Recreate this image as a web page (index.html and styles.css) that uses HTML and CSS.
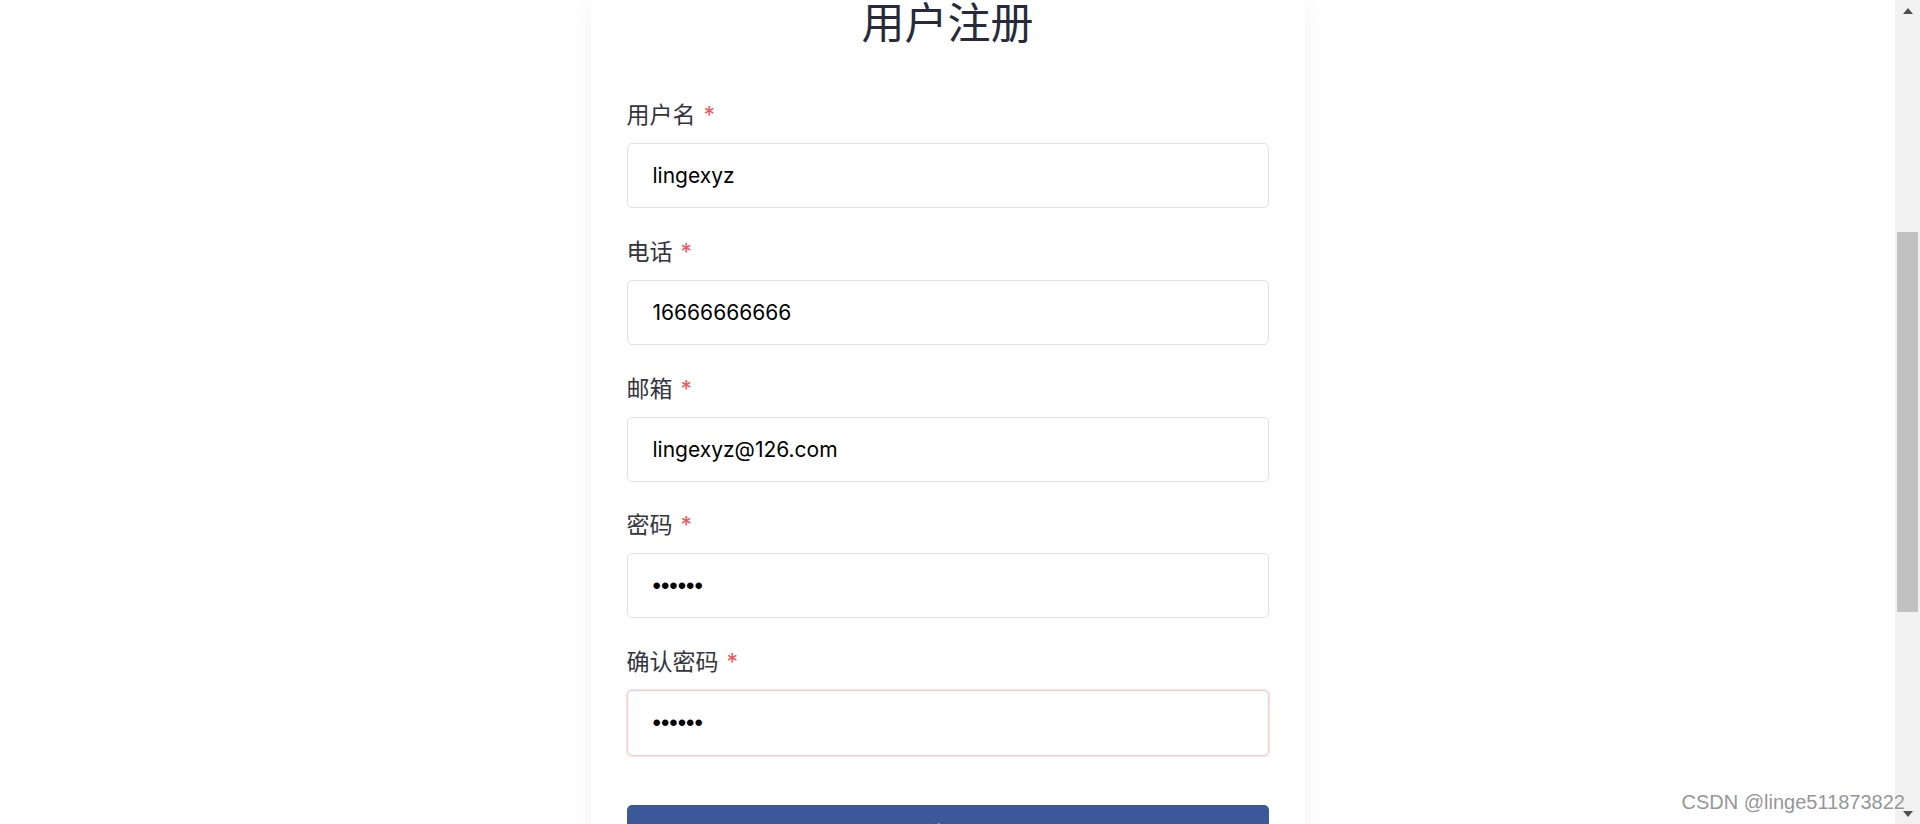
FILE: index.html
```html
<!DOCTYPE html>
<html lang="zh-CN">
<head>
<meta charset="utf-8">
<title>用户注册</title>
<link rel="stylesheet" href="styles.css">
</head>
<body>
<div class="page">
  <main class="main">
    <div class="card">
      <h1 class="title">用户注册</h1>
      <form class="form">
        <div class="field">
          <label class="label">用户名<span class="req">*</span></label>
          <input class="input" type="text" value="lingexyz">
        </div>
        <div class="field">
          <label class="label">电话<span class="req">*</span></label>
          <input class="input" type="text" value="16666666666">
        </div>
        <div class="field">
          <label class="label">邮箱<span class="req">*</span></label>
          <input class="input" type="text" value="lingexyz@126.com">
        </div>
        <div class="field">
          <label class="label">密码<span class="req">*</span></label>
          <input class="input input-password" type="password" value="123456">
        </div>
        <div class="field">
          <label class="label">确认密码<span class="req">*</span></label>
          <input class="input input-password input-invalid" type="password" value="123456">
        </div>
        <button class="btn" type="button">注册</button>
      </form>
    </div>
  </main>
  <div class="scrollbar">
    <div class="sb-btn">
      <svg width="10" height="6" viewBox="0 0 10 6"><path d="M5 0 L10 6 L0 6 Z" fill="#505050"/></svg>
    </div>
    <div class="sb-track">
      <div class="sb-thumb"></div>
    </div>
    <div class="sb-btn">
      <svg width="10" height="6" viewBox="0 0 10 6"><path d="M0 0 L10 0 L5 6 Z" fill="#505050"/></svg>
    </div>
  </div>
  <div class="watermark">CSDN @linge511873822</div>
</div>
</body>
</html>
```

FILE: styles.css
```css
* { box-sizing: border-box; }
html, body {
  margin: 0;
  padding: 0;
  height: 824px;
  overflow: hidden;
  background: #ffffff;
}
body {
  font-family: Inter, "Noto Sans CJK SC", sans-serif;
}
.page {
  position: relative;
  display: flex;
  height: 824px;
}
.main {
  flex: 1;
  display: flex;
  justify-content: center;
  align-items: flex-start;
}
.card {
  width: 714px;
  min-height: 1000px;
  padding: 2px 36px 0;
  background: #ffffff;
  box-shadow: 0 0 24px rgba(0, 0, 0, 0.055);
}
.title {
  margin: 0 0 55px;
  font-size: 43px;
  line-height: 43px;
  font-weight: 400;
  text-align: center;
  color: #272a3a;
}
.form {
  display: flex;
  flex-direction: column;
}
.field {
  display: flex;
  flex-direction: column;
  margin-bottom: 28.75px;
}
.label {
  font-size: 23px;
  line-height: 30px;
  color: #33343d;
  margin-bottom: 13px;
}
.req {
  color: #f2545b;
  margin-left: 8px;
}
.input {
  width: 100%;
  height: 65px;
  padding: 0 25px;
  border: 1px solid #e0e0e0;
  border-radius: 5px;
  font-family: Inter, "Noto Sans CJK SC", sans-serif;
  font-size: 21px;
  color: #000000;
  background: #ffffff;
  outline: none;
}
.input-password {
  font-family: "Liberation Sans", Arial, sans-serif;
  font-size: 24px;
}
.input-invalid {
  height: 66px;
  border-color: #f6c9ce;
  box-shadow: 0 0 0 1px #fce3e6;
}
.btn {
  margin-top: 20.25px;
  width: 100%;
  padding: 14px 0 10px;
  border: none;
  border-radius: 5px;
  background: #3b5998;
  color: #ffffff;
  font-family: Inter, "Noto Sans CJK SC", sans-serif;
  font-size: 22px;
  line-height: 30px;
}
.scrollbar {
  width: 25px;
  height: 824px;
  background: #f1f1f1;
  display: flex;
  flex-direction: column;
}
.sb-btn {
  height: 21px;
  display: flex;
  align-items: center;
  justify-content: center;
}
.sb-track {
  flex: 1;
  padding: 0 2px;
}
.sb-thumb {
  margin-top: 211px;
  height: 380px;
  background: #c1c1c1;
}
.watermark {
  position: absolute;
  right: 15px;
  bottom: 10px;
  font-family: "Liberation Sans", Arial, sans-serif;
  font-size: 20px;
  color: #969696;
  text-shadow: 0 0 2px #ffffff;
}
```
